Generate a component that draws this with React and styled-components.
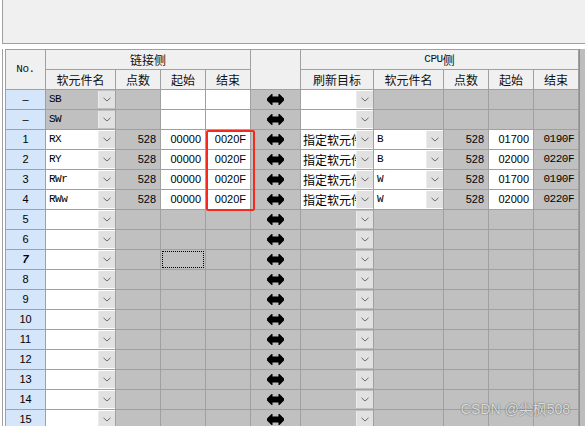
import React from "react";
import styled, { createGlobalStyle, css } from "styled-components";

const GlobalStyle = createGlobalStyle`
  html, body {
    margin: 0;
    padding: 0;
    background: #ffffff;
  }
`;

const CN = `"Noto Sans CJK SC", "Liberation Sans", sans-serif`;
const NUM = `"Liberation Sans", Arial, sans-serif`;
const MONO = `"Liberation Mono", "Courier New", monospace`;

const Window = styled.div`
  position: relative;
  width: 585px;
  height: 426px;
  overflow: hidden;
  background: #ffffff;
`;

const TopPanel = styled.div`
  height: 43px;
  margin-left: 2px;
  border-left: 1px solid #a0a0a0;
  border-bottom: 1px solid #a0a0a0;
  background: #f0f0f0;
`;

const GridArea = styled.div`
  display: flex;
  padding: 5px 0 0 2px;
`;

const Frame = styled.div`
  display: flex;
  flex: 1;
  padding-left: 2px;
  border-left: 1px solid #a0a0a0;
`;

const Sheet = styled.div`
  position: relative;
  display: grid;
  grid-template-columns: 39px 69px 44px 44px 44px 49px 72px 69px 44px 44px 44px;
  grid-auto-rows: 19px;
  gap: 1px;
  border: 1px solid #a0a0a0;
  background: #a0a0a0;
  flex: none;
`;

const Filler = styled.div`
  flex: 1;
  background: #bdbdbd;
  border-left: 1px solid #8c8c8c;
`;

const bgs = {
  head: "#f0f0f0",
  blue: "#d5e5fa",
  gray: "#c0c0c0",
  white: "#ffffff",
};

const Cell = styled.div`
  position: relative;
  display: flex;
  align-items: center;
  justify-content: ${(p) =>
    p.$align === "right" ? "flex-end" : p.$align === "left" ? "flex-start" : "center"};
  padding: 0 ${(p) => (p.$align === "right" ? "4px" : "0")} 0
    ${(p) => (p.$align === "left" ? "3px" : "0")};
  background: ${(p) => bgs[p.$bg || "gray"]};
  color: #000;
  font-family: ${NUM};
  font-size: 11px;
  line-height: 19px;
  white-space: nowrap;
  overflow: hidden;
  ${(p) =>
    p.$italic &&
    css`
      font-style: italic;
      font-weight: bold;
    `}
  ${(p) =>
    p.$col &&
    css`
      grid-column: ${p.$col};
    `}
  ${(p) =>
    p.$row &&
    css`
      grid-row: ${p.$row};
    `}
`;

const HeadCell = styled(Cell)`
  background: #f0f0f0;
  font-family: ${CN};
  font-size: 12px;
  color: #111;
`;

const MonoText = styled.span`
  font-family: ${MONO};
  font-size: 11px;
  letter-spacing: -0.5px;
`;

const DropCell = styled.div`
  display: flex;
  align-items: stretch;
  background: ${(p) => bgs[p.$bg || "white"]};
  overflow: hidden;
`;

const DropText = styled.div`
  flex: 1;
  min-width: 0;
  padding-left: ${(p) => (p.$cn ? "2px" : "3px")};
  font-family: ${(p) => (p.$cn ? CN : MONO)};
  font-size: ${(p) => (p.$cn ? "12px" : "11px")};
  letter-spacing: ${(p) => (p.$cn ? "0" : "-0.5px")};
  line-height: 19px;
  white-space: nowrap;
  overflow: hidden;
  background: ${(p) => bgs[p.$bg || "white"]};
`;

const DropButton = styled.div`
  flex: none;
  width: 16px;
  margin: 1px 0;
  display: flex;
  align-items: center;
  justify-content: center;
  background: #e1e1e1;
  border-left: 1px solid #ececec;
`;

const ArrowCell = styled.div`
  display: flex;
  align-items: center;
  justify-content: center;
  background: #c0c0c0;
`;

const FocusBox = styled.div`
  position: absolute;
  inset: 1px;
  border: 1px dotted #000;
`;

const Highlight = styled.div`
  position: absolute;
  left: 200px;
  top: 80px;
  width: 45px;
  height: 77px;
  border: 2px solid #f52a1c;
  border-radius: 2px;
  pointer-events: none;
`;

const Watermark = styled.div`
  position: absolute;
  right: 15px;
  top: 398px;
  font-family: ${NUM}, ${CN};
  font-size: 14px;
  color: rgba(255, 255, 255, 0.8);
  text-shadow: 0 0 1px rgba(0, 0, 0, 0.55), 0 0 2px rgba(0, 0, 0, 0.25);
`;

const Chevron = () => (
  <svg width="8" height="5" viewBox="0 0 8 5">
    <polyline points="0.5,0.8 4,4 7.5,0.8" fill="none" stroke="#6a6a6a" strokeWidth="1" />
  </svg>
);

const Arrow = () => (
  <svg width="17" height="11" viewBox="0 0 17 11">
    <path
      d="M0 4.5 L0 6.5 L4.5 11 L5.5 11 L5.5 8.5 L11.5 8.5 L11.5 11 L12.5 11 L17 6.5 L17 4.5 L12.5 0 L11.5 0 L11.5 2.5 L5.5 2.5 L5.5 0 L4.5 0 Z"
      fill="#000"
    />
  </svg>
);

const Drop = ({ text, bg, cn }) => (
  <DropCell $bg={bg}>
    <DropText $bg={bg} $cn={cn}>
      {text}
    </DropText>
    <DropButton>
      <Chevron />
    </DropButton>
  </DropCell>
);

const active = [
  { dev: "RX", cdev: "B", cstart: "01700", cend: "0190F" },
  { dev: "RY", cdev: "B", cstart: "02000", cend: "0220F" },
  { dev: "RWr", cdev: "W", cstart: "01700", cend: "0190F" },
  { dev: "RWw", cdev: "W", cstart: "02000", cend: "0220F" },
];

function LinkRow({ dev }) {
  return (
    <>
      <Cell $bg="blue">–</Cell>
      <Drop text={dev} bg="gray" />
      <Cell />
      <Cell $bg="white" />
      <Cell $bg="white" />
      <ArrowCell>
        <Arrow />
      </ArrowCell>
      <Drop text="" bg="white" />
      <Cell />
      <Cell />
      <Cell />
      <Cell />
    </>
  );
}

function ActiveRow({ no, row }) {
  return (
    <>
      <Cell $bg="blue">{no}</Cell>
      <Drop text={row.dev} bg="white" />
      <Cell $align="right">528</Cell>
      <Cell $bg="white" $align="right">
        00000
      </Cell>
      <Cell $bg="white" $align="right">
        0020F
      </Cell>
      <ArrowCell>
        <Arrow />
      </ArrowCell>
      <Drop text="指定软元件" bg="white" cn />
      <Drop text={row.cdev} bg="white" />
      <Cell $align="right">528</Cell>
      <Cell $bg="white" $align="right">
        {row.cstart}
      </Cell>
      <Cell $align="right">
        <MonoText>{row.cend}</MonoText>
      </Cell>
    </>
  );
}

function EmptyRow({ no }) {
  const current = no === 7;
  return (
    <>
      <Cell $bg="blue" $italic={current}>
        {no}
      </Cell>
      <Drop text="" bg="white" />
      <Cell />
      <Cell>{current && <FocusBox />}</Cell>
      <Cell />
      <ArrowCell>
        <Arrow />
      </ArrowCell>
      <Drop text="" bg="gray" />
      <Cell />
      <Cell />
      <Cell />
      <Cell />
    </>
  );
}

export default function App() {
  const empty = [];
  for (let i = 5; i <= 16; i++) empty.push(i);

  return (
    <Window>
      <GlobalStyle />
      <TopPanel />
      <GridArea>
        <Frame>
          <Sheet>
            <HeadCell $col="1" $row="1 / span 2">
              <MonoText>No.</MonoText>
            </HeadCell>
            <HeadCell $col="2 / span 4" $row="1">
              链接侧
            </HeadCell>
            <HeadCell $col="6" $row="1 / span 2" />
            <HeadCell $col="7 / span 5" $row="1">
              <MonoText>CPU</MonoText>侧
            </HeadCell>
            <HeadCell $col="2">软元件名</HeadCell>
            <HeadCell>点数</HeadCell>
            <HeadCell>起始</HeadCell>
            <HeadCell>结束</HeadCell>
            <HeadCell $col="7">刷新目标</HeadCell>
            <HeadCell>软元件名</HeadCell>
            <HeadCell>点数</HeadCell>
            <HeadCell>起始</HeadCell>
            <HeadCell>结束</HeadCell>

            <LinkRow dev="SB" />
            <LinkRow dev="SW" />
            {active.map((row, i) => (
              <ActiveRow key={row.dev} no={i + 1} row={row} />
            ))}
            {empty.map((n) => (
              <EmptyRow key={n} no={n} />
            ))}

            <Highlight />
          </Sheet>
          <Filler />
        </Frame>
      </GridArea>
      <Watermark>CSDN @尖枫508</Watermark>
    </Window>
  );
}
